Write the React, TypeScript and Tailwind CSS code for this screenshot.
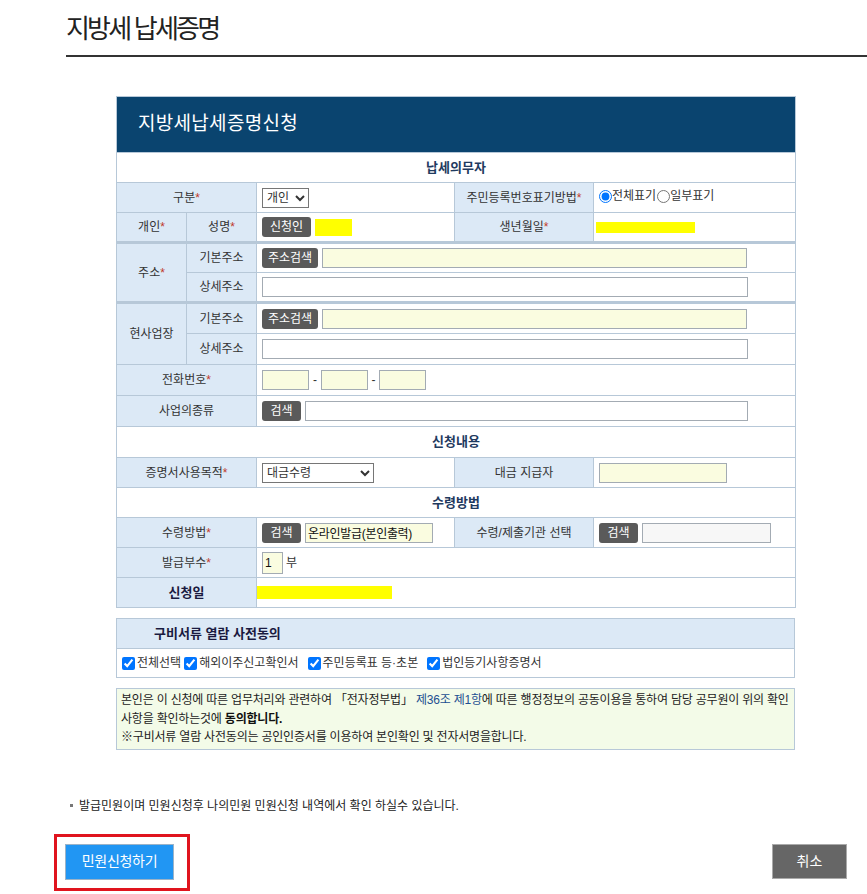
import React from 'react'

const thBase = 'bg-[#dce9f6] border border-[#b7c8d8] text-center h-[30px] p-0'
const th = `${thBase} font-normal text-[#333]`
const td = 'bg-white border border-[#b7c8d8] h-[30px] px-[5px] py-0 text-left'
const thick = 'border-b-[3px] border-b-[#b7c8d8]'
const section = 'bg-white border border-[#b7c8d8] h-[30px] text-center font-bold text-[13px] text-[#1f3a5f]'
const btn = 'h-[20px] rounded-[3px] bg-[#5a5a5a] text-white text-[12px] leading-[20px] text-center shrink-0'
const input = 'h-[20px] border border-[#a3abb3] px-[2px] text-[12px] outline-none'

function Star() {
  return <span className="text-[#c0392b]">*</span>
}

export default function App() {
  return (
    <div className="w-[867px] min-h-[894px] bg-white text-[12px] tracking-[0px] text-[#333] font-['Liberation_Sans','Noto_Sans_CJK_KR',sans-serif]">
      <h1 className="ml-[66px] pt-[12px] pb-[9px] leading-[34px] border-b-2 border-[#333] text-[26px] tracking-[-2.8px] font-normal text-[#222]">
        지방세 납세증명
      </h1>

      <div className="ml-[116px] mt-[39px] w-[679px]">
        <table className="w-[679px] table-fixed border-collapse">
          <colgroup>
            <col className="w-[70px]" />
            <col className="w-[70px]" />
            <col className="w-[198px]" />
            <col className="w-[139px]" />
            <col className="w-[202px]" />
          </colgroup>
          <tbody>
            <tr>
              <th colSpan={5} className="h-[56px] bg-[#0a446f] border border-[#b7c8d8] text-left pl-[21px] text-white text-[19px] tracking-[0.3px] font-normal">
                지방세납세증명신청
              </th>
            </tr>
            <tr>
              <td colSpan={5} className={section}>납세의무자</td>
            </tr>
            <tr>
              <th colSpan={2} className={th}>구분<Star /></th>
              <td className={td}>
                <select className="h-[20px] w-[47px] border border-[#767676] text-[12px] bg-white">
                  <option>개인</option>
                </select>
              </td>
              <th className={th}>주민등록번호표기방법<Star /></th>
              <td className={td}>
                <label className="inline-flex items-center">
                  <input type="radio" name="rrn" defaultChecked className="w-[13px] h-[13px] m-0" />
                  <span>전체표기</span>
                </label>
                <label className="inline-flex items-center ml-[1px]">
                  <input type="radio" name="rrn" className="w-[13px] h-[13px] m-0" />
                  <span>일부표기</span>
                </label>
              </td>
            </tr>
            <tr>
              <th className={`${th} ${thick}`}>개인<Star /></th>
              <th className={`${th} ${thick}`}>성명<Star /></th>
              <td className={`${td} ${thick}`}>
                <div className="flex items-center gap-[4px]">
                  <span className={`${btn} w-[49px]`}>신청인</span>
                  <span className="w-[37px] h-[17px] bg-[#ffff00]" />
                </div>
              </td>
              <th className={`${th} ${thick}`}>생년월일<Star /></th>
              <td className={`${td} ${thick} pl-[2px]`}>
                <div className="w-[99px] h-[11px] bg-[#ffff00]" />
              </td>
            </tr>
            <tr>
              <th rowSpan={2} className={`${th} ${thick}`}>주소<Star /></th>
              <th className={th}>기본주소</th>
              <td colSpan={3} className={td}>
                <div className="flex items-center gap-[4px]">
                  <span className={`${btn} w-[56px]`}>주소검색</span>
                  <input readOnly className={`${input} w-[425px] bg-[#fafce0]`} />
                </div>
              </td>
            </tr>
            <tr>
              <th className={`${th} ${thick}`}>상세주소</th>
              <td colSpan={3} className={`${td} ${thick}`}>
                <input readOnly className={`${input} w-[486px] bg-white`} />
              </td>
            </tr>
            <tr>
              <th rowSpan={2} className={th}>현사업장</th>
              <th className={`${th} h-[31px]`}>기본주소</th>
              <td colSpan={3} className={td}>
                <div className="flex items-center gap-[4px]">
                  <span className={`${btn} w-[56px]`}>주소검색</span>
                  <input readOnly className={`${input} w-[425px] bg-[#fafce0]`} />
                </div>
              </td>
            </tr>
            <tr>
              <th className={`${th} h-[31px]`}>상세주소</th>
              <td colSpan={3} className={td}>
                <input readOnly className={`${input} w-[486px] bg-white`} />
              </td>
            </tr>
            <tr>
              <th colSpan={2} className={`${th} h-[31px]`}>전화번호<Star /></th>
              <td colSpan={3} className={td}>
                <div className="flex items-center">
                  <input readOnly className={`${input} w-[47px] bg-[#fafce0]`} />
                  <span className="w-[12px] text-center">-</span>
                  <input readOnly className={`${input} w-[47px] bg-[#fafce0]`} />
                  <span className="w-[11px] text-center">-</span>
                  <input readOnly className={`${input} w-[47px] bg-[#fafce0]`} />
                </div>
              </td>
            </tr>
            <tr>
              <th colSpan={2} className={`${th} h-[31px]`}>사업의종류</th>
              <td colSpan={3} className={td}>
                <div className="flex items-center gap-[4px]">
                  <span className={`${btn} w-[39px]`}>검색</span>
                  <input readOnly className={`${input} w-[443px] bg-white`} />
                </div>
              </td>
            </tr>
            <tr>
              <td colSpan={5} className={`${section} h-[31px]`}>신청내용</td>
            </tr>
            <tr>
              <th colSpan={2} className={th}>증명서사용목적<Star /></th>
              <td className={td}>
                <select className="h-[20px] w-[112px] border border-[#767676] text-[12px] bg-white">
                  <option>대금수령</option>
                </select>
              </td>
              <th className={th}>대금 지급자</th>
              <td className={td}>
                <input readOnly className={`${input} w-[128px] bg-[#fafce0]`} />
              </td>
            </tr>
            <tr>
              <td colSpan={5} className={section}>수령방법</td>
            </tr>
            <tr>
              <th colSpan={2} className={th}>수령방법<Star /></th>
              <td className={td}>
                <div className="flex items-center gap-[4px]">
                  <span className={`${btn} w-[39px]`}>검색</span>
                  <input readOnly defaultValue="온라인발급(본인출력)" className={`${input} w-[128px] bg-[#fafce0] text-[#111] tracking-[-0.3px]`} />
                </div>
              </td>
              <th className={th}>수령/제출기관 선택</th>
              <td className={td}>
                <div className="flex items-center gap-[4px]">
                  <span className={`${btn} w-[39px]`}>검색</span>
                  <input readOnly className={`${input} w-[129px] bg-[#f7f7f7]`} />
                </div>
              </td>
            </tr>
            <tr>
              <th colSpan={2} className={th}>발급부수<Star /></th>
              <td colSpan={3} className={td}>
                <div className="flex items-center gap-[3px]">
                  <input readOnly defaultValue="1" className={`${input} w-[21px] h-[22px] bg-[#fafce0] text-[#111]`} />
                  <span>부</span>
                </div>
              </td>
            </tr>
            <tr>
              <th colSpan={2} className={`${thBase} font-bold text-[13px] text-[#1a1a40]`}>신청일</th>
              <td colSpan={3} className={`${td} pl-0`}>
                <div className="w-[135px] h-[13px] bg-[#ffff00]" />
              </td>
            </tr>
          </tbody>
        </table>

        <div className="mt-[10px] border border-[#b7c8d8]">
          <div className="h-[30px] bg-[#dce9f6] border-b border-[#b7c8d8] pl-[37px] flex items-center font-bold text-[13px] text-[#1a1a40]">
            구비서류 열람 사전동의
          </div>
          <div className="h-[28px] flex items-center pl-[5px]">
            {['전체선택', '해외이주신고확인서', '주민등록표 등·초본', '법인등기사항증명서'].map((label, i) => (
              <label key={label} className={`inline-flex items-center ${i === 0 ? '' : i === 1 ? 'ml-[3px]' : 'ml-[9px]'}`}>
                <input type="checkbox" defaultChecked className="w-[13px] h-[13px] m-0 mr-[2px]" />
                <span>{label}</span>
              </label>
            ))}
          </div>
        </div>

        <div className="mt-[10px] border border-[#b7c8d8] bg-[#f3fbe8] px-[4px] py-[2px] leading-[18.5px] tracking-[-0.2px] text-[#222]">
          <p className="whitespace-nowrap">
            본인은 이 신청에 따른 업무처리와 관련하여 「전자정부법」 <span className="text-[#1d4f91]">제36조 제1항</span>에 따른 행정정보의 공동이용을 통하여 담당 공무원이 위의 확인
          </p>
          <p>
            사항을 확인하는것에 <b className="text-[#111]">동의합니다.</b>
          </p>
          <p>※구비서류 열람 사전동의는 공인인증서를 이용하여 본인확인 및 전자서명을합니다.</p>
        </div>
      </div>

      <p className="ml-[70px] mt-[48px] leading-[16px] text-[#222] flex items-center">
        <span className="w-[3px] h-[3px] bg-[#777] mr-[6px]" />
        발급민원이며 민원신청후 나의민원 민원신청 내역에서 확인 하실수 있습니다.
      </p>

      <div className="mt-[20px] pl-[54px] pr-[20px] flex justify-between items-start">
        <div className="border-[3px] border-[#e0141e] pl-[8px] pt-[7px] pr-[13px] pb-[8px]">
          <button className="w-[109px] h-[36px] bg-[#2196f3] border border-[#9bb3c8] text-white text-[14px] tracking-[-0.3px]">
            민원신청하기
          </button>
        </div>
        <button className="mt-[10px] w-[75px] h-[35px] bg-[#666] border border-[#aaa] text-white text-[14px]">
          취소
        </button>
      </div>
    </div>
  )
}
